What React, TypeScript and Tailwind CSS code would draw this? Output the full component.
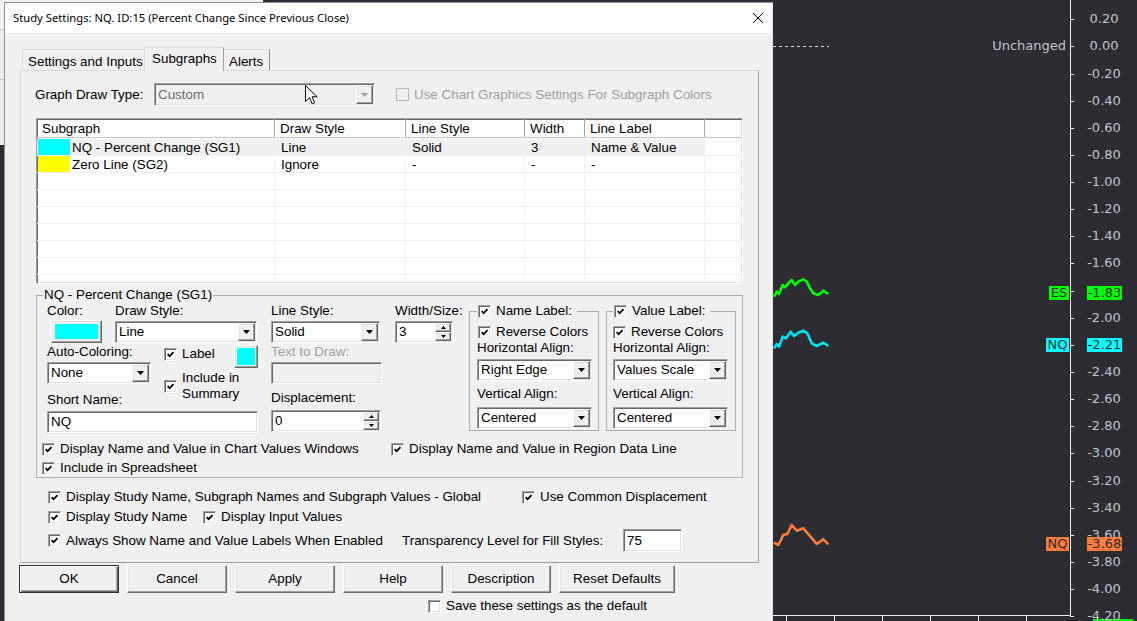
import React from "react";

const sunken =
  "border border-t-[#a0a0a0] border-l-[#a0a0a0] border-b-white border-r-white shadow-[inset_1px_1px_0_#696969,inset_-1px_-1px_0_#e3e3e3]";
const raised =
  "border border-t-white border-l-white border-b-[#696969] border-r-[#696969] shadow-[inset_-1px_-1px_0_#a0a0a0,inset_1px_1px_0_#e3e3e3]";

function Box({ on = true, dim = false }: { on?: boolean; dim?: boolean }) {
  return (
    <span
      className={`flex h-[13px] w-[13px] shrink-0 items-center justify-center ${
        dim ? "border border-[#b9b9b9] bg-[#f0f0f0]" : `${sunken} bg-white`
      }`}
    >
      {on ? (
        <svg width="7" height="7" viewBox="0 0 7 7" className="block">
          <path d="M0.6 3.2 L2.6 5.2 L6.5 1.2" fill="none" stroke="#000" strokeWidth="1.7" />
        </svg>
      ) : null}
    </span>
  );
}

function Check({ label, on = true, className = "" }: { label: string; on?: boolean; className?: string }) {
  return (
    <div className={`flex h-[16px] items-center gap-[5px] whitespace-nowrap ${className}`}>
      <Box on={on} />
      <span>{label}</span>
    </div>
  );
}

function Combo({ value, className = "", dim = false }: { value: string; className?: string; dim?: boolean }) {
  return (
    <div className={`flex items-center ${sunken} ${dim ? "bg-[#f0f0f0] text-[#6d6d6d]" : "bg-white"} ${className}`}>
      <span className="min-w-0 flex-1 truncate pl-[3px]">{value}</span>
      <span className={`mr-px flex h-[calc(100%-2px)] w-[17px] shrink-0 items-center justify-center bg-[#f0f0f0] ${raised}`}>
        <svg width="7" height="4" viewBox="0 0 7 4" className="block">
          <path d="M0 0H7L3.5 4Z" fill={dim ? "#a0a0a0" : "#000"} />
        </svg>
      </span>
    </div>
  );
}

function Spin({ value, className = "" }: { value: string; className?: string }) {
  return (
    <div className={`flex ${sunken} bg-white ${className}`}>
      <span className="flex-1 self-center pl-[3px]">{value}</span>
      <span className="my-px mr-px flex w-[16px] flex-col">
        <span className={`flex flex-1 items-center justify-center bg-[#f0f0f0] ${raised}`}>
          <svg width="5" height="3" viewBox="0 0 5 3" className="block">
            <path d="M2.5 0L5 3H0Z" fill="#000" />
          </svg>
        </span>
        <span className={`flex flex-1 items-center justify-center bg-[#f0f0f0] ${raised}`}>
          <svg width="5" height="3" viewBox="0 0 5 3" className="block">
            <path d="M0 0H5L2.5 3Z" fill="#000" />
          </svg>
        </span>
      </span>
    </div>
  );
}

function Field({ value = "", className = "", dim = false }: { value?: string; className?: string; dim?: boolean }) {
  return (
    <div className={`flex items-center pl-[3px] ${sunken} ${dim ? "bg-[#f0f0f0]" : "bg-white"} ${className}`}>{value}</div>
  );
}

function ColorButton({ className }: { className: string }) {
  return (
    <div className={`flex bg-[#f0f0f0] ${raised} ${className}`}>
      <div className="h-full w-full bg-[#00ffff]" />
    </div>
  );
}

const cols = ["w-[238px]", "w-[131px]", "w-[119px]", "w-[60px]", "w-[120px]"];
const heads = ["Subgraph", "Draw Style", "Line Style", "Width", "Line Label"];
const rows = [
  { swatch: "bg-[#00ffff]", cells: ["NQ - Percent Change (SG1)", "Line", "Solid", "3", "Name & Value"], sel: true },
  { swatch: "bg-[#ffff00]", cells: ["Zero Line (SG2)", "Ignore", "-", "-", "-"], sel: false },
  ...Array.from({ length: 7 }, () => ({ swatch: "", cells: ["", "", "", "", ""], sel: false })),
];

function SubgraphTable() {
  return (
    <div className={`mt-[12px] h-[166px] w-[707px] overflow-hidden bg-white ${sunken}`}>
      <div className="flex h-[19px] border-b border-[#c6c6c6]">
        {heads.map((h, i) => (
          <div key={h} className={`${cols[i]} flex items-center border-r border-[#a8a8a8] pl-[5px] pt-[2px]`}>
            {h}
          </div>
        ))}
        <div className="flex-1" />
      </div>
      <div className="mt-px">
        {rows.map((r, ri) => (
          <div key={ri} className="flex h-[17px] border-b border-[#f0f0f0]">
            {r.cells.map((c, ci) => (
              <div
                key={ci}
                className={`${cols[ci]} flex items-center border-r border-[#f0f0f0] ${r.sel ? "bg-[#f0f0f0]" : ""} ${
                  ci === 0 ? "" : "pl-[6px] pt-[2px]"
                }`}
              >
                {ci === 0 && r.swatch ? (
                  <>
                    <span className={`ml-px h-[16px] w-[32px] ${r.swatch}`} />
                    <span className="ml-[2px] pt-[2px]">{c}</span>
                  </>
                ) : (
                  c
                )}
              </div>
            ))}
            <div className="flex-1" />
          </div>
        ))}
      </div>
    </div>
  );
}

function LabelGroup({ title, align, wide }: { title: string; align: string; wide: boolean }) {
  return (
    <fieldset className={`w-[130px] border border-[#adadad] pb-px ${wide ? "pl-[7px]" : "pl-[6px]"}`}>
      <legend className="flex h-[16px] items-center gap-[5px] pl-px pr-[5px]">
        <Box />
        <span>{title}</span>
      </legend>
      <Check label="Reverse Colors" className={`mt-[5px] ${wide ? "ml-px" : ""}`} />
      <div className="h-[16px]">Horizontal Align:</div>
      <Combo value={align} className="mt-[3px] h-[22px] w-[115px]" />
      <div className="mt-[5px] h-[16px]">Vertical Align:</div>
      <Combo value="Centered" className="mt-[5px] h-[22px] w-[115px]" />
    </fieldset>
  );
}

function SubgraphGroup() {
  return (
    <fieldset className="mt-[3px] w-[707px] border border-[#adadad] pb-px">
      <legend className="ml-[6px] px-px leading-[16px]">NQ - Percent Change (SG1)</legend>
      <div className="flex items-start pl-[10px]">
        <div className="grid grid-cols-[68px_49px_94px_13px_111px] grid-rows-[41px_48px_auto]">
          <div className="col-start-1 row-start-1">
            <div className="h-[16px]">Color:</div>
            <ColorButton className="ml-[4px] mt-px h-[23px] w-[51px] p-[3px]" />
          </div>
          <div className="col-span-2 col-start-2 row-start-1">
            <div className="h-[16px]">Draw Style:</div>
            <Combo value="Line" className="mt-[2px] h-[22px] w-[142px]" />
          </div>
          <div className="col-start-5 row-start-1">
            <div className="h-[16px]">Line Style:</div>
            <Combo value="Solid" className="mt-[2px] h-[22px] w-[109px]" />
          </div>

          <div className="col-span-2 col-start-1 row-start-2">
            <div className="h-[16px]">Auto-Coloring:</div>
            <Combo value="None" className="mt-[2px] h-[22px] w-[104px]" />
          </div>
          <div className="col-start-3 row-start-2">
            <div className="flex items-start">
              <Check label="Label" className="mt-[2px]" />
              <ColorButton className="ml-auto mt-px h-[23px] w-[24px] p-[2px]" />
            </div>
            <div className="mt-[2px] flex items-center gap-[5px]">
              <Box />
              <span className="leading-[16px]">
                Include in
                <br />
                Summary
              </span>
            </div>
          </div>
          <div className="col-start-5 row-start-2">
            <div className="h-[16px] text-[#a0a0a0]">Text to Draw:</div>
            <Field dim className="mt-[2px] h-[22px] w-[111px]" />
          </div>

          <div className="col-span-3 col-start-1 row-start-3">
            <div className="h-[16px]">Short Name:</div>
            <Field value="NQ" className="mt-[3px] h-[22px] w-[211px]" />
          </div>
          <div className="col-start-5 row-start-3">
            <div className="-mt-[2px] h-[16px]">Displacement:</div>
            <Spin value="0" className="mt-[4px] h-[22px] w-[110px]" />
          </div>
        </div>

        <div className="ml-[13px] w-[58px]">
          <div className="h-[16px] whitespace-nowrap">Width/Size:</div>
          <Spin value="3" className="mt-[2px] h-[22px] w-[58px]" />
        </div>

        <div className="ml-[16px]">
          <LabelGroup title="Name Label:" align="Right Edge" wide />
        </div>
        <div className="ml-[7px]">
          <LabelGroup title="Value Label:" align="Values Scale" wide={false} />
        </div>
      </div>
      <div className="mt-[8px] flex pl-[5px]">
        <Check label="Display Name and Value in Chart Values Windows" className="w-[349px]" />
        <Check label="Display Name and Value in Region Data Line" />
      </div>
      <Check label="Include in Spreadsheet" className="mt-[3px] pl-[5px]" />
    </fieldset>
  );
}

function Dialog() {
  const buttons = ["OK", "Cancel", "Apply", "Help", "Description", "Reset Defaults"];
  return (
    <div className="relative z-10 ml-[4px] mt-[2px] flex h-[622px] w-[769px] shrink-0 flex-col border border-[#8f8f8f] border-r-[#e4e4e4] bg-[#f0f0f0] font-['Liberation_Sans',Arial,sans-serif] text-[13.4px] leading-[16px] text-black">
      <div className="flex h-[30px] shrink-0 items-center justify-between bg-white pl-[8px] pr-[9px]">
        <span className="font-['Noto_Sans',sans-serif] text-[11.25px]">
          Study Settings: NQ. ID:15 (Percent Change Since Previous Close)
        </span>
        <svg width="10" height="10" viewBox="0 0 10 10" className="block">
          <path d="M0 0L10 10M10 0L0 10" stroke="#000" strokeWidth="1" />
        </svg>
      </div>

      <div className="ml-[15px] pt-[14px]">
        <div className="flex h-[23px] items-end pl-[2px]">
          <div className="flex h-[21px] w-[122px] items-start border-l border-t border-[#dadada] border-r-[#b4b4b4] pl-[5px] pt-[4px]">
            Settings and Inputs
          </div>
          <div className="relative z-10 -mb-px flex h-[24px] w-[80px] items-start border-x border-t border-[#dadada] border-r-[#a0a0a0] bg-[#f0f0f0] pl-[7px] pt-[3px]">
            Subgraphs
          </div>
          <div className="flex h-[21px] w-[46px] items-start border-r border-t border-[#dadada] border-r-[#8c8c8c] pl-[5px] pt-[4px]">
            Alerts
          </div>
        </div>

        <div className="flex h-[493px] w-[739px] flex-col border border-[#dadada] border-b-[#a0a0a0] border-r-[#a0a0a0] pl-[15px]">
          <div className="mt-[12px] flex h-[23px] items-center">
            <span className="-ml-px w-[119px]">Graph Draw Type:</span>
            <Combo value="Custom" dim className="h-[23px] w-[221px]" />
            <div className="ml-[21px] flex items-center gap-[5px] text-[#a0a0a0]">
              <Box on={false} dim />
              <span>Use Chart Graphics Settings For Subgraph Colors</span>
            </div>
          </div>

          <SubgraphTable />
          <SubgraphGroup />

          <div className="mt-[11px] flex pl-[12px]">
            <Check label="Display Study Name, Subgraph Names and Subgraph Values - Global" className="w-[474px]" />
            <Check label="Use Common Displacement" />
          </div>
          <div className="mt-[4px] flex pl-[12px]">
            <Check label="Display Study Name" className="w-[155px]" />
            <Check label="Display Input Values" />
          </div>
          <div className="mt-[4px] flex h-[23px] items-center pl-[12px]">
            <Check label="Always Show Name and Value Labels When Enabled" className="w-[354px]" />
            <span className="w-[221px]">Transparency Level for Fill Styles:</span>
            <Field value="75" className="h-[23px] w-[59px]" />
          </div>
        </div>
      </div>

      <div className="ml-[14px] mt-[2px] flex gap-[8px]">
        {buttons.map((b) => (
          <div
            key={b}
            className={`flex h-[28px] items-center justify-center bg-[#f0f0f0] ${
              b === "Reset Defaults" ? "w-[116px]" : "w-[100px]"
            } ${
              b === "OK"
                ? "border border-[#333] shadow-[inset_1px_1px_0_#fff,inset_-1px_-1px_0_#696969,inset_-2px_-2px_0_#a0a0a0]"
                : raised
            }`}
          >
            {b}
          </div>
        ))}
      </div>

      <div className="ml-[423px] mt-[5px] flex h-[16px] items-center gap-[5px]">
        <Box on={false} />
        <span>Save these settings as the default</span>
      </div>
    </div>
  );
}

const scale = [
  "0.20", "0.00", "-0.20", "-0.40", "-0.60", "-0.80", "-1.00", "-1.20", "-1.40", "-1.60", "-1.80", "-2.00",
  "-2.20", "-2.40", "-2.60", "-2.80", "-3.00", "-3.20", "-3.40", "-3.60", "-3.80", "-4.00", "-4.20",
];

const green = "1,296.7 3.7,291.7 6,294 9.7,285 12,287.3 15.3,283.3 18.7,280 22,285 25.3,281.7 30.3,279.3 33.7,281.7 37,288.3 40.3,293.3 45.3,295 50.3,290.7 55.3,294";
const cyan = "1,348.3 3.7,344 6,346.7 9.7,336.7 13,338.3 17.7,331.7 21,336 25.3,332.7 30.3,330.7 34.3,333.3 38.7,343.3 43.7,346 50.3,342.7 55.3,346";
const orange = "1,542.7 5.3,545 10.3,535 14.3,534 18.7,525 23.7,530.7 30.3,528.3 37,536 43.7,544 50.3,539.3 55.3,544.3";

const tags = [
  { text: "ES", left: "left-[276px] w-[20px]", top: "top-[286px]", bg: "bg-[#00ff00]" },
  { text: "-1.83", left: "left-[314px] w-[35px]", top: "top-[286px]", bg: "bg-[#00ff00]" },
  { text: "NQ", left: "left-[273px] w-[23px]", top: "top-[338px]", bg: "bg-[#00ffff]" },
  { text: "-2.21", left: "left-[314px] w-[35px]", top: "top-[338px]", bg: "bg-[#00ffff]" },
  { text: "NQ", left: "left-[273px] w-[23px]", top: "top-[537px]", bg: "bg-[#ff7d3c]" },
  { text: "-3.68", left: "left-[314px] w-[35px]", top: "top-[537px]", bg: "bg-[#ff7d3c]" },
];

function Chart() {
  return (
    <div className="relative h-full flex-1 font-['DejaVu_Sans',Verdana,sans-serif] text-[13px] text-[#bfc4cc]">
      <svg className="absolute inset-0" width="364" height="621" viewBox="0 0 364 621">
        <line x1="0" y1="46.5" x2="56" y2="46.5" stroke="#d8d8d8" strokeDasharray="3 3" />
        <polyline points={green} fill="none" stroke="#00ff00" strokeWidth="2.6" strokeLinejoin="round" />
        <polyline points={cyan} fill="none" stroke="#00e5ee" strokeWidth="2.6" strokeLinejoin="round" />
        <polyline points={orange} fill="none" stroke="#ff7d3c" strokeWidth="2.6" strokeLinejoin="round" />
        <line x1="297.5" y1="0" x2="297.5" y2="616" stroke="#f0f0f0" />
        <line x1="0" y1="615.5" x2="298" y2="615.5" stroke="#f0f0f0" />
        {[13, 61, 109, 157, 205, 253].map((x) => (
          <line key={x} x1={x + 0.5} y1="616" x2={x + 0.5} y2="621" stroke="#f0f0f0" />
        ))}
        {scale.map((s, i) => {
          const y = Math.round(19.3 + 27.13 * i) + 0.5;
          return <line key={s} x1="297" y1={y} x2="301" y2={y} stroke="#f0f0f0" />;
        })}
        <rect x="320" y="619" width="40" height="2" fill="#00ff00" />
      </svg>
      <span className="absolute left-[190px] top-[38px] w-[103px] text-right leading-[16px]">Unchanged</span>
      {scale.map((s, i) => (
        <span
          key={s}
          className="absolute left-[306px] w-[50px] text-center leading-[16px]"
          style={{ top: 19.3 + 27.13 * i - 8 }}
        >
          {s}
        </span>
      ))}
      {tags.map((t, i) => (
        <span
          key={i}
          className={`absolute ${t.left} ${t.top} ${t.bg} h-[14px] text-center leading-[14px] text-[#2b2b2b]`}
        >
          {t.text}
        </span>
      ))}
    </div>
  );
}

export default function App() {
  return (
    <div className="relative flex h-[621px] w-[1137px] overflow-hidden bg-[#2d2c32]">
      <div className="absolute left-0 top-0 h-[145px] w-[263px] bg-[#ececec]">
        <div className="h-[30px] border-b border-[#c4c4c4] bg-[#f4f4f4]" />
        <div className="h-[50px] border-b border-[#c4c4c4]" />
      </div>
      <Dialog />
      <Chart />
      <svg className="absolute left-[305px] top-[85px] z-20" width="13" height="20" viewBox="0 0 13 20">
        <path d="M0.5 0.5 L0.5 16.5 L4.5 12.7 L7.2 18.8 L9.6 17.8 L7 11.8 L12.2 11.8 Z" fill="#fff" stroke="#000" strokeWidth="1" />
      </svg>
    </div>
  );
}
